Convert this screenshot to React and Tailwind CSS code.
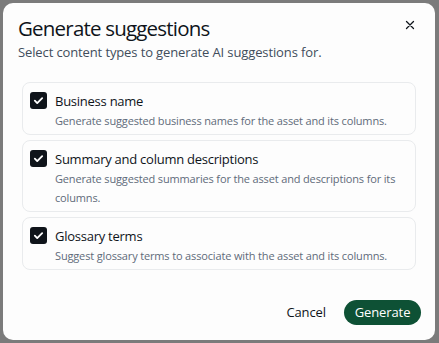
import React, { useState } from 'react';

const options = [
  {
    id: 'name',
    label: 'Business name',
    description: 'Generate suggested business names for the asset and its columns.',
  },
  {
    id: 'summary',
    label: 'Summary and column descriptions',
    description: 'Generate suggested summaries for the asset and descriptions for its columns.',
  },
  {
    id: 'glossary',
    label: 'Glossary terms',
    description: 'Suggest glossary terms to associate with the asset and its columns.',
  },
];

function Checkbox({ checked, onChange }) {
  return (
    <button
      onClick={onChange}
      className={`mt-[1px] flex h-[17px] w-[17px] shrink-0 items-center justify-center rounded-[3px] ${
        checked ? 'bg-[#0f141a]' : 'border-2 border-[#8c8c94] bg-white'
      }`}
    >
      {checked && (
        <svg width="11" height="11" viewBox="0 0 12 12" fill="none">
          <path d="M2 6.2l2.6 2.6L10 3.4" stroke="white" strokeWidth="2" strokeLinecap="round" strokeLinejoin="round" />
        </svg>
      )}
    </button>
  );
}

function App() {
  const [selected, setSelected] = useState({ name: true, summary: true, glossary: true });

  const toggle = (id) => {
    setSelected({ ...selected, [id]: !selected[id] });
  };

  return (
    <div className="h-[343px] w-[439px] bg-[#7b7b7b] pl-[3px] pt-[3px] font-['Open_Sans',sans-serif]">
      <div className="flex h-[337px] w-[432px] flex-col rounded-[10px] bg-[#fdfdfd] px-[15px] pt-[11px]">
        <div className="flex items-start justify-between">
          <h1 className="text-[20.5px] leading-[28px] tracking-[-0.8px] text-[#0f141a]">Generate suggestions</h1>
          <button className="mr-[3px] mt-[4px] text-[#0f141a]">
            <svg width="14" height="14" viewBox="0 0 14 14" fill="none">
              <path d="M3.5 3.5l7 7M10.5 3.5l-7 7" stroke="currentColor" strokeWidth="1.3" strokeLinecap="round" />
            </svg>
          </button>
        </div>
        <p className="mt-[1px] text-[13px] leading-[18px] tracking-[-0.12px] text-[#414d5c]">
          Select content types to generate AI suggestions for.
        </p>

        <div className="mt-[21px] flex flex-col gap-[5px] px-[4px]">
          {options.map((opt) => (
            <div key={opt.id} className="flex gap-[8px] rounded-[8px] border border-[#e9ebed] px-[7px] pb-[4px] pt-[8px]">
              <Checkbox checked={selected[opt.id]} onChange={() => toggle(opt.id)} />
              <div className="flex flex-col">
                <span className="text-[13px] leading-[20px] tracking-[-0.25px] text-[#0f141a]">{opt.label}</span>
                <span className="text-[11px] leading-[19px] tracking-[-0.15px] text-[#5f6b7a]">{opt.description}</span>
              </div>
            </div>
          ))}
        </div>

        <div className="mt-[30px] flex items-center justify-end gap-[18px]">
          <button className="text-[13px] font-medium tracking-[-0.1px] text-[#0f141a]">Cancel</button>
          <button className="mr-[-1px] h-[25px] w-[77px] rounded-full bg-[#0e5135] text-[13px] font-medium tracking-[-0.1px] text-white">
            Generate
          </button>
        </div>
      </div>
    </div>
  );
}

export default App;
